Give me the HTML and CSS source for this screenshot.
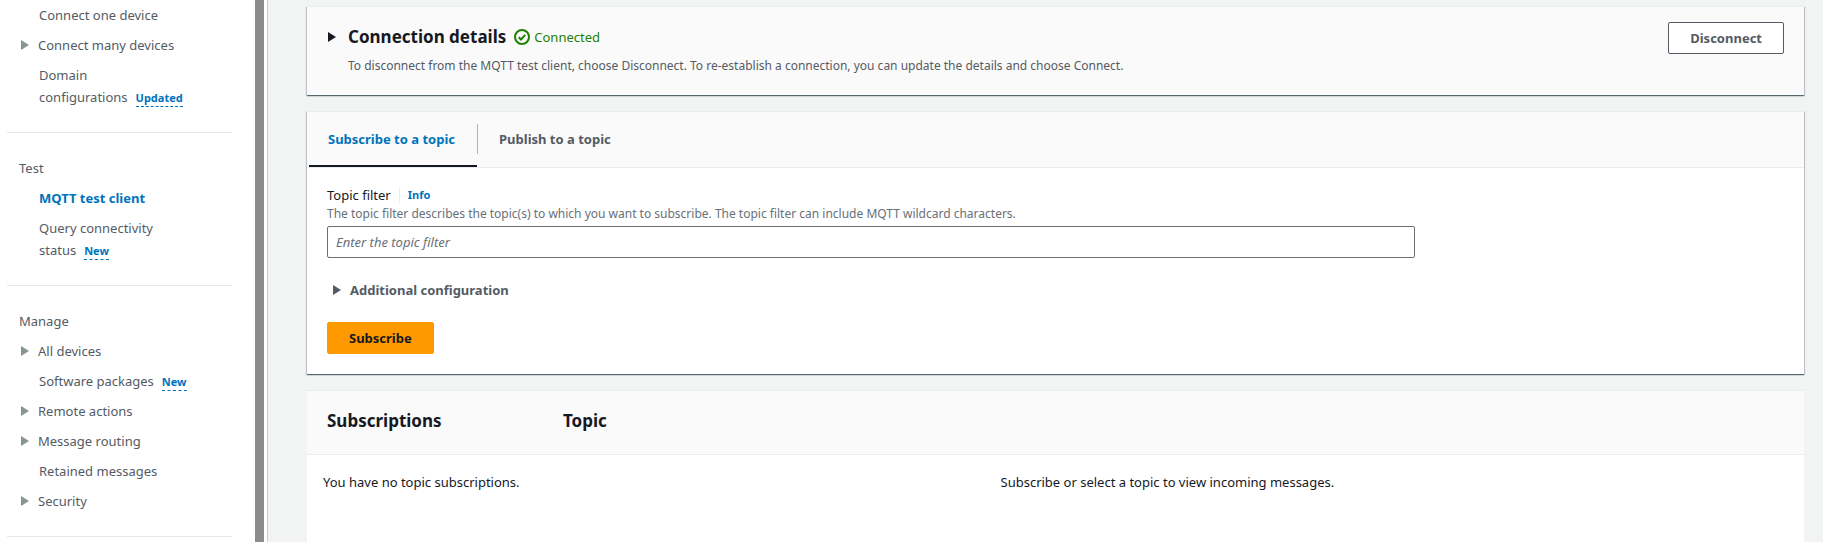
FILE: index.html
```html
<!DOCTYPE html>
<html lang="en">
<head>
<meta charset="utf-8">
<title>MQTT test client</title>
<link rel="stylesheet" href="styles.css">
</head>
<body>
<div class="app">
  <nav class="sidebar" aria-label="Service navigation">
    <ul class="nav-group">
      <li><a class="nav-link" href="#">Connect one device</a></li>
      <li><button class="nav-toggle" type="button"><svg class="caret" viewBox="0 0 8 10" aria-hidden="true"><path d="M0 0v10l8-5z"/></svg>Connect many devices</button></li>
      <li><a class="nav-link" href="#">Domain<br>configurations</a><a class="badge" href="#">Updated</a></li>
    </ul>
    <hr class="nav-divider">
    <h2 class="nav-heading">Test</h2>
    <ul class="nav-group">
      <li><a class="nav-link active" href="#" aria-current="page">MQTT test client</a></li>
      <li><a class="nav-link" href="#">Query connectivity<br>status</a><a class="badge" href="#">New</a></li>
    </ul>
    <hr class="nav-divider">
    <h2 class="nav-heading">Manage</h2>
    <ul class="nav-group">
      <li><button class="nav-toggle" type="button"><svg class="caret" viewBox="0 0 8 10" aria-hidden="true"><path d="M0 0v10l8-5z"/></svg>All devices</button></li>
      <li><a class="nav-link" href="#">Software packages</a><a class="badge" href="#">New</a></li>
      <li><button class="nav-toggle" type="button"><svg class="caret" viewBox="0 0 8 10" aria-hidden="true"><path d="M0 0v10l8-5z"/></svg>Remote actions</button></li>
      <li><button class="nav-toggle" type="button"><svg class="caret" viewBox="0 0 8 10" aria-hidden="true"><path d="M0 0v10l8-5z"/></svg>Message routing</button></li>
      <li><a class="nav-link" href="#">Retained messages</a></li>
      <li><button class="nav-toggle" type="button"><svg class="caret" viewBox="0 0 8 10" aria-hidden="true"><path d="M0 0v10l8-5z"/></svg>Security</button></li>
    </ul>
    <hr class="nav-divider">
  </nav>
  <div class="scroll-track"></div>

  <main class="content">
    <section class="card connection">
      <div class="connection-text">
        <div class="connection-title">
          <button class="section-toggle" type="button"><svg class="caret" viewBox="0 0 8 10" aria-hidden="true"><path d="M0 0v10l8-5z"/></svg>Connection details</button>
          <span class="status"><svg class="status-icon" viewBox="0 0 16 16" aria-hidden="true"><circle cx="8" cy="8" r="7"/><path d="M4.7 8.2l2.3 2.3 4.2-4.6"/></svg>Connected</span>
        </div>
        <p class="connection-note">To disconnect from the MQTT test client, choose Disconnect. To re-establish a connection, you can update the details and choose Connect.</p>
      </div>
      <button class="button" type="button">Disconnect</button>
    </section>

    <section class="card">
      <div class="tabs" role="tablist">
        <button class="tab selected" type="button" role="tab" aria-selected="true">Subscribe to a topic</button>
        <button class="tab" type="button" role="tab" aria-selected="false">Publish to a topic</button>
      </div>
      <form class="subscribe-form">
        <div class="label-row">
          <label for="topic-filter">Topic filter</label>
          <a class="info" href="#">Info</a>
        </div>
        <p class="hint" id="topic-hint">The topic filter describes the topic(s) to which you want to subscribe. The topic filter can include MQTT wildcard characters.</p>
        <input class="text-input" id="topic-filter" type="text" placeholder="Enter the topic filter" aria-describedby="topic-hint">
        <button class="expander" type="button"><svg class="caret" viewBox="0 0 8 10" aria-hidden="true"><path d="M0 0v10l8-5z"/></svg>Additional configuration</button>
        <button class="button primary" type="button">Subscribe</button>
      </form>
    </section>

    <section class="messages">
      <header class="messages-header">
        <h2>Subscriptions</h2>
        <h2>Topic</h2>
      </header>
      <div class="messages-body">
        <p>You have no topic subscriptions.</p>
        <p>Subscribe or select a topic to view incoming messages.</p>
      </div>
    </section>
  </main>
</div>
</body>
</html>
```
FILE: styles.css
```css
* {
  box-sizing: border-box;
}

body {
  margin: 0;
  background: #f2f3f3;
  color: #16191f;
  font: 13px/22px "Noto Sans", "Open Sans", sans-serif;
}

h2,
p,
ul {
  margin: 0;
  padding: 0;
}

button,
input {
  font: inherit;
  color: inherit;
}

button {
  cursor: pointer;
}

a {
  color: inherit;
  text-decoration: none;
}

.app {
  display: flex;
  min-height: 100vh;
}

.caret {
  flex: none;
  width: 8px;
  height: 10px;
  fill: currentColor;
}

/* Sidebar */

.sidebar {
  flex: none;
  width: 255px;
  padding: 4px 23px 0 7px;
  background: #fff;
  color: #545b64;
}

.scroll-track {
  flex: none;
  width: 13px;
  background: #fff;
  border-left: 9px solid #8b8b8b;
  border-right: 1px solid #c8cccc;
}

.nav-group {
  display: flex;
  flex-direction: column;
  gap: 8px;
  padding-left: 32px;
  list-style: none;
}

.nav-heading {
  margin-bottom: 8px;
  padding-left: 12px;
  font-size: 13px;
  font-weight: 400;
}

.nav-divider {
  height: 1px;
  margin: 24px 0;
  border: 0;
  background: #e3e8e8;
}

.nav-link.active {
  color: #0073bb;
  font-weight: 700;
}

.nav-toggle {
  display: flex;
  align-items: center;
  gap: 9px;
  margin-left: -18px;
  padding: 0;
  border: 0;
  background: none;
}

.nav-toggle .caret {
  color: #879596;
}

.badge {
  display: inline-block;
  margin-left: 8px;
  border-bottom: 1px dashed #0073bb;
  color: #0073bb;
  font-size: 11px;
  font-weight: 700;
  line-height: 16px;
}

/* Main column */

.content {
  display: flex;
  flex: 1;
  flex-direction: column;
  gap: 16px;
  min-width: 0;
  padding: 6px 19px 0 39px;
}

.card {
  background: #fff;
  border-top: 1px solid #eaeded;
  box-shadow: 0 1px 1px 0 rgba(0, 28, 36, 0.5), 1px 1px 1px 0 rgba(0, 28, 36, 0.15), -1px 1px 1px 0 rgba(0, 28, 36, 0.15);
}

.connection {
  display: flex;
  align-items: flex-start;
  justify-content: space-between;
  padding: 15px 20px 18px 21px;
  background: #fafafa;
}

.connection-title {
  display: flex;
  align-items: center;
  gap: 8px;
}

.section-toggle {
  display: flex;
  align-items: center;
  gap: 12px;
  padding: 0;
  border: 0;
  background: none;
  font-size: 17px;
  font-weight: 700;
  line-height: 30px;
}

.status {
  display: flex;
  align-items: center;
  gap: 4px;
  color: #1d8102;
}

.status-icon {
  width: 16px;
  height: 16px;
  fill: none;
  stroke: currentColor;
  stroke-width: 2;
}

.connection-note {
  margin-top: 3px;
  padding-left: 20px;
  color: #545b64;
  font-size: 12px;
}

.button {
  height: 32px;
  padding: 0 21px;
  border: 1px solid #545b64;
  border-radius: 2px;
  background: #fff;
  color: #545b64;
  font-weight: 700;
  line-height: 22px;
}

.button.primary {
  border-color: #ff9900;
  background: #ff9900;
  color: #16191f;
}

/* Tabs */

.tabs {
  display: flex;
  padding-left: 2px;
  background: #fafafa;
  border-bottom: 1px solid #eaeded;
}

.tab {
  position: relative;
  padding: 16px 22px 15px;
  border: 0;
  border-bottom: 2px solid transparent;
  background: none;
  color: #545b64;
  font-weight: 700;
}

.tab.selected {
  padding-left: 19px;
  border-bottom-color: #16191f;
  color: #0073bb;
}

.tab.selected::after {
  content: "";
  position: absolute;
  top: 12px;
  right: -1px;
  width: 1px;
  height: 30px;
  background: #aab7b8;
}

/* Subscribe form */

.subscribe-form {
  display: flex;
  flex-direction: column;
  align-items: flex-start;
  padding: 16px 20px 20px;
}

.label-row {
  display: flex;
  align-items: center;
}

.info {
  margin-left: 8px;
  padding-left: 8px;
  border-left: 1px solid #eaeded;
  color: #0073bb;
  font-size: 11px;
  font-weight: 700;
  line-height: 16px;
}

.hint {
  color: #687078;
  font-size: 12px;
  line-height: 16px;
}

.text-input {
  width: calc(75% - 5px);
  height: 32px;
  margin-top: 4px;
  padding: 0 8px;
  border: 1px solid #687078;
  border-radius: 2px;
  background: #fff;
}

.text-input::placeholder {
  color: #687078;
  font-style: italic;
  opacity: 1;
}

.expander {
  display: flex;
  align-items: center;
  gap: 9px;
  margin: 21px 0;
  padding: 0 6px;
  border: 0;
  background: none;
  color: #545b64;
  font-weight: 700;
}

/* Subscriptions and messages */

.messages {
  flex: 1;
  background: #fff;
  border-top: 1px solid #eaeded;
}

.messages-header {
  display: grid;
  grid-template-columns: 236px 1fr;
  padding: 19px 20px 22px;
  background: #fafafa;
  border-bottom: 1px solid #eaeded;
}

.messages-header h2 {
  font-size: 17px;
  font-weight: 700;
}

.messages-body {
  display: flex;
  padding: 16px;
}

.messages-body p {
  flex: 0 0 calc(50% - 55px);
}
```
